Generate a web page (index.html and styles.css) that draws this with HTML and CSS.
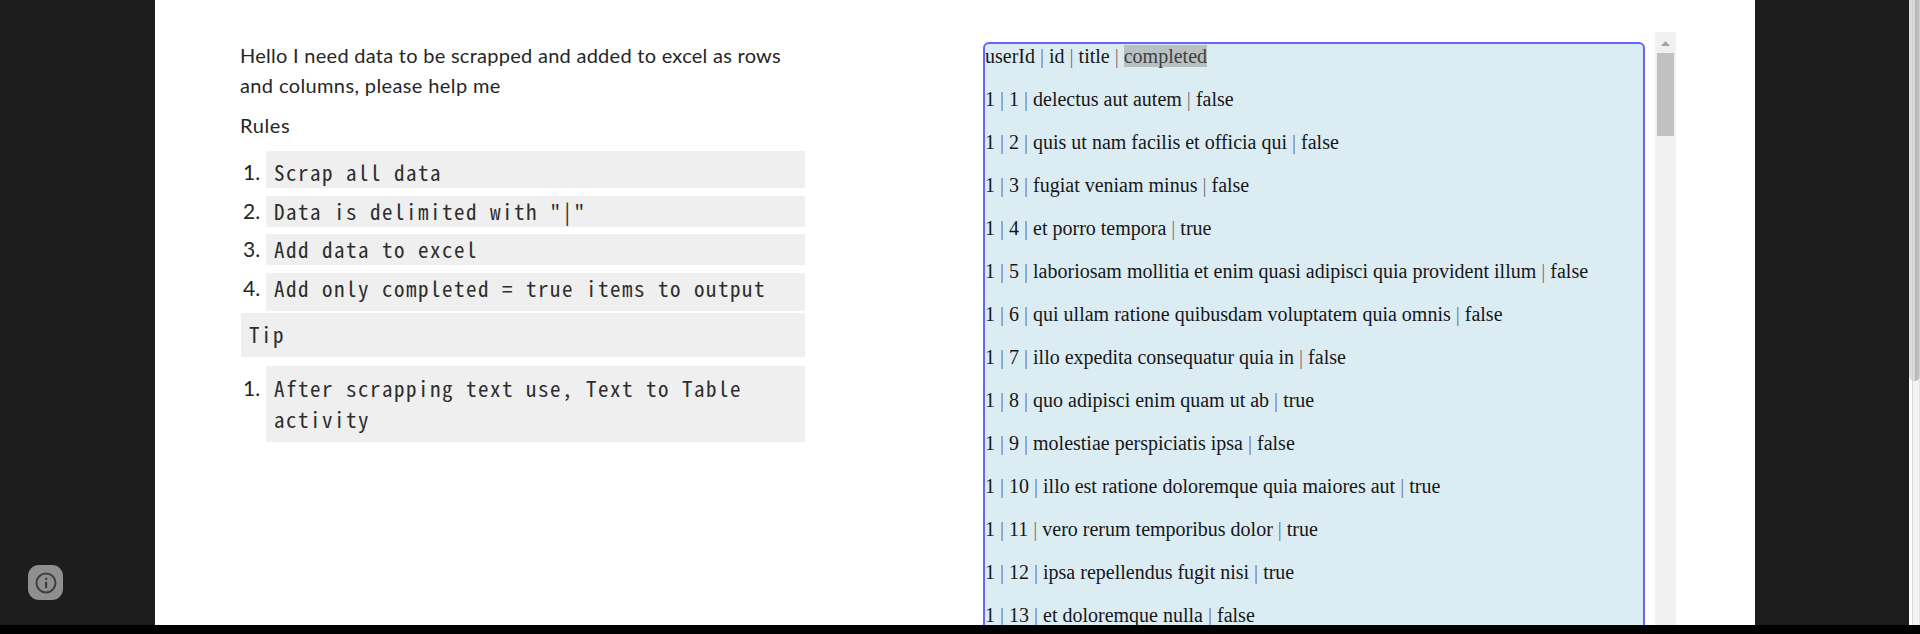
FILE: index.html
```html
<!DOCTYPE html>
<html lang="en">
<head>
<meta charset="utf-8">
<title>Scrap data challenge</title>
<link rel="stylesheet" href="styles.css">
</head>
<body>
<div class="screen">
  <aside class="side side-left">
    <button class="info" aria-label="Info">
      <svg width="22" height="22" viewBox="0 0 22 22"><circle cx="11" cy="11" r="9.5" fill="none" stroke="#3c4043" stroke-width="2"/><path d="M10 9.7h2.2v6.3H10zM10 5.8h2.2V8H10z" fill="#3c4043"/></svg>
    </button>
  </aside>
  <main class="page">
    <section class="brief">
      <p class="text intro"><span class="l1">Hello I need data to be scrapped and added to excel as rows</span><br><span class="l2">and columns, please help me</span></p>
      <p class="text rules">Rules</p>
      <div class="item first"><span class="num">1.</span><code class="code">Scrap all data</code></div>
      <div class="item second"><span class="num">2.</span><code class="code">Data is delimited with "|"</code></div>
      <div class="item third"><span class="num">3.</span><code class="code">Add data to excel</code></div>
      <div class="item fourth"><span class="num">4.</span><code class="code">Add only completed = true items to output</code></div>
      <code class="code tip">Tip</code>
      <div class="item after"><span class="num">1.</span><code class="code">After scrapping text use, Text to Table activity</code></div>
    </section>
    <section class="frame">
      <div class="data">
        <p>userId <i>|</i> id <i>|</i> title <i>|</i> <span class="mark">completed</span></p>
        <p>1 <i>|</i> 1 <i>|</i> delectus aut autem <i>|</i> false</p>
        <p>1 <i>|</i> 2 <i>|</i> quis ut nam facilis et officia qui <i>|</i> false</p>
        <p>1 <i>|</i> 3 <i>|</i> fugiat veniam minus <i>|</i> false</p>
        <p>1 <i>|</i> 4 <i>|</i> et porro tempora <i>|</i> true</p>
        <p>1 <i>|</i> 5 <i>|</i> laboriosam mollitia et enim quasi adipisci quia provident illum <i>|</i> false</p>
        <p>1 <i>|</i> 6 <i>|</i> qui ullam ratione quibusdam voluptatem quia omnis <i>|</i> false</p>
        <p>1 <i>|</i> 7 <i>|</i> illo expedita consequatur quia in <i>|</i> false</p>
        <p>1 <i>|</i> 8 <i>|</i> quo adipisci enim quam ut ab <i>|</i> true</p>
        <p>1 <i>|</i> 9 <i>|</i> molestiae perspiciatis ipsa <i>|</i> false</p>
        <p>1 <i>|</i> 10 <i>|</i> illo est ratione doloremque quia maiores aut <i>|</i> true</p>
        <p>1 <i>|</i> 11 <i>|</i> vero rerum temporibus dolor <i>|</i> true</p>
        <p>1 <i>|</i> 12 <i>|</i> ipsa repellendus fugit nisi <i>|</i> true</p>
        <p>1 <i>|</i> 13 <i>|</i> et doloremque nulla <i>|</i> false</p>
      </div>
      <div class="scroll">
        <svg width="9" height="5" viewBox="0 0 9 5"><path d="M4.5 0 9 5H0z" fill="#a3a3a3"/></svg>
        <div class="thumb"></div>
      </div>
    </section>
  </main>
  <aside class="side side-right"></aside>
  <div class="window-scroll"><div class="window-thumb"></div></div>
</div>
</body>
</html>
```
FILE: styles.css
```css
* { box-sizing: border-box; }
body { margin: 0; background: #000; height: 634px; overflow: hidden; }
p { margin: 0; }
.screen { display: flex; height: 625px; overflow: hidden; background: #fff; }
.side { background: #1d1d1d; flex: none; }
.side-left { width: 155px; display: flex; align-items: flex-end; padding: 0 0 25px 28px; }
.side-right { width: 154px; }
.info { width: 35px; height: 35px; padding: 0; border: 0; border-radius: 11px; background: #8f8f8f; display: flex; align-items: center; justify-content: center; }
.page { width: 1600px; flex: none; display: flex; overflow: hidden; }
.brief { width: 650px; margin-left: 85px; margin-right: 93px; padding-top: 40px; color: #262626; flex: none; }
.text, .num { font-family: Lato, sans-serif; font-size: 20px; line-height: 30px; }
.text { white-space: nowrap; }
.l1 { letter-spacing: 0.27px; }
.l2 { letter-spacing: 0.38px; }
.rules { margin-top: 10px; letter-spacing: 0.6px; }
.item { display: flex; width: 564px; margin-left: 1px; }
.num { width: 25px; flex: none; padding-left: 2px; font-size: 21px; }
.code { display: block; flex: 1; background: #efefef; font-family: "Noto Sans Mono CJK SC", "Liberation Mono", monospace; font-size: 21px; letter-spacing: 1.5px; line-height: 31px; padding: 0 7px 0 8px; color: #2e2e2e; }
.first { margin-top: 11px; height: 37px; }
.first .num, .first .code { padding-top: 6px; }
.second { margin-top: 8px; height: 31px; }
.third { margin-top: 7px; height: 31px; }
.fourth { margin-top: 8px; height: 38px; }
.tip { width: 564px; height: 44px; margin: 2px 0 0 1px; padding-top: 6px; }
.after { margin-top: 9px; height: 76px; }
.after .num, .after .code { padding-top: 7px; }
.frame { display: flex; height: 700px; padding-top: 32px; }
.data { width: 662px; height: 650px; margin-top: 10px; padding-top: 1px; border: 2px solid #6464ff; border-radius: 6px; background: #dcecf3; font: 20px/23px "Liberation Serif", serif; color: #151718; }
.data p { margin-bottom: 20px; white-space: nowrap; }
.data i { font-style: normal; color: #6c7477; }
.mark { background: #b9c0c2; color: #3d4042; }
.scroll { width: 21px; height: 650px; margin-left: 10px; background: #f0f0f0; display: flex; flex-direction: column; align-items: center; padding-top: 9px; }
.thumb { width: 17px; height: 83px; margin-top: 7px; background: #c1c1c1; }
.window-scroll { width: 11px; background: linear-gradient(90deg, #fff 3px, #d8d8d8 3px, #d8d8d8 4px, #f3f3f3 4px, #f3f3f3 10px, #e4e4e4 10px); }
.window-thumb { height: 381px; border-radius: 0 0 5px 5px; background: linear-gradient(90deg, #dfdcdc 3px, #c8c8c8 3px, #d9d9d9 4px, #d9d9d9 6px, #b4b4b4 6px, #c2c2c2 10px, #cecece 10px); }
```
